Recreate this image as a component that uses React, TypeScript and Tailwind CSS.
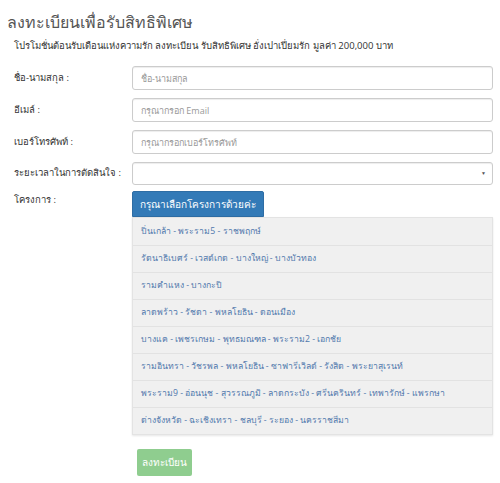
const PROJECTS = [
  "ปิ่นเกล้า - พระราม5 - ราชพฤกษ์",
  "รัตนาธิเบศร์ - เวสต์เกต - บางใหญ่ - บางบัวทอง",
  "รามคำแหง - บางกะปิ",
  "ลาดพร้าว - รัชดา - พหลโยธิน - ดอนเมือง",
  "บางแค - เพชรเกษม - พุทธมณฑล - พระราม2 - เอกชัย",
  "รามอินทรา - วัชรพล - พหลโยธิน - ซาฟารีเวิลด์ - รังสิต - พระยาสุเรนท์",
  "พระราม9 - อ่อนนุช - สุวรรณภูมิ - ลาดกระบัง - ศรีนครินทร์ - เทพารักษ์ - แพรกษา",
  "ต่างจังหวัด - ฉะเชิงเทรา - ชลบุรี - ระยอง - นครราชสีมา",
];

const FIELDS = [
  { label: "ชื่อ-นามสกุล :", placeholder: "ชื่อ-นามสกุล" },
  { label: "อีเมล์ :", placeholder: "กรุณากรอก Email" },
  { label: "เบอร์โทรศัพท์ :", placeholder: "กรุณากรอกเบอร์โทรศัพท์" },
];

export default function App() {
  return (
    <div className="w-[500px] h-[483px] bg-white text-[#333] font-['Open_Sans','Noto_Sans',sans-serif] overflow-hidden">
      <div className="px-[7px] pt-[11px]">
        <h1 className="text-[16px] leading-[22px] font-light text-[#555]">ลงทะเบียนเพื่อรับสิทธิพิเศษ</h1>
        <p className="mt-[6px] pl-[7px] text-[9.5px] leading-[14px]">
          โปรโมชั่นต้อนรับเดือนแห่งความรัก ลงทะเบียน รับสิทธิพิเศษ อั่งเปาเปี่ยมรัก มูลค่า 200,000 บาท
        </p>
      </div>

      <form className="mt-[13px] pl-[14px] pr-[7px] flex flex-col gap-[8px]">
        {FIELDS.map((f) => (
          <div key={f.label} className="flex items-center">
            <label className="w-[118px] text-[9.5px] font-medium">{f.label}</label>
            <input
              placeholder={f.placeholder}
              className="flex-1 h-[24px] rounded-[3px] border border-[#ccc] px-[8px] text-[9px] placeholder:text-[#999] shadow-[inset_0_1px_1px_rgba(0,0,0,0.075)]"
            />
          </div>
        ))}
        <div className="flex items-center">
          <label className="w-[118px] text-[9.5px] font-medium">ระยะเวลาในการตัดสินใจ :</label>
          <div className="flex-1 h-[23px] rounded-[3px] border border-[#ccc] flex items-center justify-end pr-[6px] shadow-[inset_0_1px_1px_rgba(0,0,0,0.075)]">
            <span className="text-[5px] leading-none text-[#555]">▼</span>
          </div>
        </div>
        <div className="flex items-start -mt-[2px]">
          <label className="w-[118px] text-[9.5px] font-medium pt-[2px]">โครงการ :</label>
          <div className="flex-1 flex flex-col">
            <div className="self-start bg-[#337ab7] text-white text-[10px] h-[26px] px-[7px] flex items-center border border-[#2e6da4] rounded-t-[2px]">
              กรุณาเลือกโครงการด้วยค่ะ
            </div>
            <div className="bg-[#f0f0f0] border border-[#e3e3e3] shadow-[0_1px_2px_rgba(0,0,0,0.1)]">
              {PROJECTS.map((p, i) => (
                <div
                  key={p}
                  className={`h-[27px] flex items-center px-[8px] text-[8.7px] text-[#5079ad] ${
                    i > 0 ? "border-t border-[#e2e2e2]" : ""
                  }`}
                >
                  {p}
                </div>
              ))}
            </div>
          </div>
        </div>
        <div className="pl-[123px] pt-[5px]">
          <button
            type="button"
            className="h-[27px] px-[5px] bg-[#8fcd8f] text-white text-[10px] rounded-[2px]"
          >
            ลงทะเบียน
          </button>
        </div>
      </form>
    </div>
  );
}
